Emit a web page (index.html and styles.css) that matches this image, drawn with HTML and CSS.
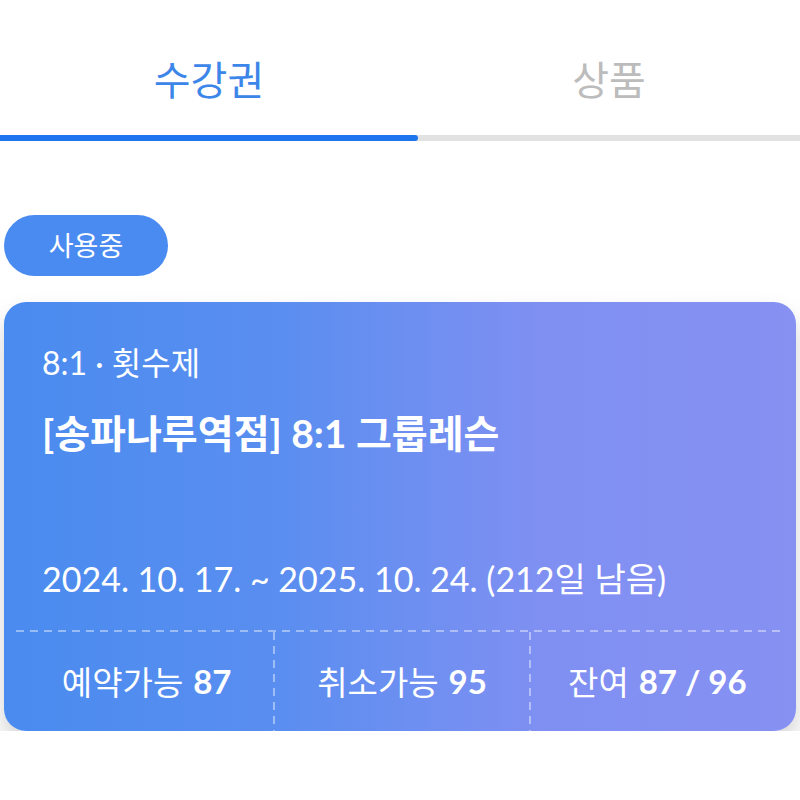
FILE: index.html
```html
<!DOCTYPE html>
<html lang="ko">
<head>
<meta charset="utf-8">
<link rel="stylesheet" href="styles.css">
</head>
<body>
<div class="tabs">
  <div class="tab active">수강권</div>
  <div class="tab">상품</div>
</div>
<div class="track"><div class="thumb"></div></div>
<div class="content">
  <div class="badge">사용중</div>
  <div class="card">
    <div class="info">
      <div class="type">8:1 · 횟수제</div>
      <div class="title">[송파나루역점] 8:1 그룹레슨</div>
      <div class="date">2024. 10. 17. ~ 2025. 10. 24. (212일 남음)</div>
    </div>
    <div class="hline"></div>
    <div class="stats">
      <div class="stat">예약가능 <b>87</b></div>
      <div class="vline"></div>
      <div class="stat">취소가능 <b>95</b></div>
      <div class="vline"></div>
      <div class="stat">잔여 <b>87 / 96</b></div>
    </div>
  </div>
</div>
</body>
</html>
```
FILE: styles.css
```css
* { box-sizing: border-box; }
html, body { margin: 0; padding: 0; background: #fff; }
body { font-family: Lato, "Noto Sans CJK KR", sans-serif; width: 800px; }

.tabs { display: flex; height: 135px; }
.tab {
  display: flex; align-items: center; justify-content: center;
  font-size: 40px; color: #bcbcbc;
  height: 135px; padding-top: 20px;
  width: 382px;
}
.tab.active { color: #3d86e9; width: 418px; }

.track { height: 6px; background: #e2e2e2; }
.thumb { width: 418px; height: 6px; background: #1f75ee; border-radius: 0 3px 3px 0; }

.content { padding: 74px 4px 0 4px; }
.badge {
  width: 164px; height: 61px; border-radius: 31px;
  background: #4a8bf2; color: #fff;
  font-size: 27px; display: flex; align-items: center; justify-content: center;
  padding-bottom: 3px;
}
.card {
  margin-top: 26px; height: 429px; border-radius: 22px;
  background: linear-gradient(90deg, #4a8bef 0%, #5a8ef0 35%, #7f90f2 68%, #8691f2 100%);
  box-shadow: 0 14px 24px rgba(0,0,0,0.18);
  color: #fff;
  display: flex; flex-direction: column;
}
.info {
  height: 328px; padding: 40px 38px 30px 38px;
  display: flex; flex-direction: column;
}
.type { font-size: 32px; line-height: 42px; }
.title { font-size: 39px; font-weight: 700; line-height: 46px; margin-top: 26px; }
.date { font-size: 34px; line-height: 42px; margin-top: auto; }
.hline {
  height: 2px; margin: 0 12px;
  background: repeating-linear-gradient(90deg, rgba(255,255,255,0.42) 0 8px, transparent 8px 14px);
}
.stats { flex: 1; display: flex; padding: 0 12px 0 16px; }
.stat {
  flex: 1; display: flex; align-items: center; justify-content: center;
  font-size: 33px; gap: 0.3em; padding-bottom: 2px;
}
.stat b { font-weight: 700; }
.vline {
  width: 2px;
  background: repeating-linear-gradient(180deg, rgba(255,255,255,0.42) 0 8px, transparent 8px 14px);
}
```
